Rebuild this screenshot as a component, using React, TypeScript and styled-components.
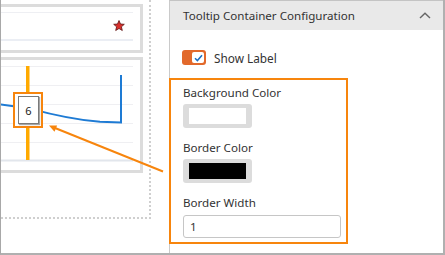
import * as React from "react";
import styled, { createGlobalStyle } from "styled-components";

const GlobalStyle = createGlobalStyle`
  html, body {
    margin: 0;
    padding: 0;
    background: #ffffff;
  }
  body {
    font-family: "Noto Sans", "Open Sans", sans-serif;
    color: #333333;
  }
`;

const ORANGE = "#f7850d";

const Frame = styled.div`
  position: relative;
  width: 445px;
  height: 255px;
  box-sizing: border-box;
  display: grid;
  grid-template-columns: 168px 1fr;
  border-left: 1px solid #a8a8a8;
  border-right: 2px solid #b0b0b0;
  border-bottom: 2px solid #b0b0b0;
  overflow: hidden;
`;

const Canvas = styled.div`
  overflow: hidden;
`;

const DropZone = styled.div`
  width: 150px;
  height: 219px;
  box-sizing: border-box;
  padding: 4px 6px 0 0;
  border-right: 2px dotted #cfcfcf;
  border-bottom: 2px dotted #cfcfcf;
  display: flex;
  flex-direction: column;
  gap: 4px;
`;

const Card = styled.div<{ $h: number }>`
  position: relative;
  margin-left: -10px;
  height: ${(p) => p.$h}px;
  box-sizing: border-box;
  border: 3px solid #dcdcdc;
  background: #ffffff;
  svg {
    display: block;
  }
`;

const TipMark = styled.div`
  position: absolute;
  left: 19px;
  top: 32px;
  width: 30px;
  height: 36px;
  box-sizing: border-box;
  border: 2px solid ${ORANGE};
  background: #ffffff;
  padding: 2px 2px 0 3px;
`;

const TipBox = styled.div`
  width: 21px;
  height: 28px;
  box-sizing: border-box;
  border: 1px solid #7a7a7a;
  box-shadow: 1px 1px 1px rgba(0, 0, 0, 0.35);
  background: #ffffff;
  display: flex;
  align-items: center;
  justify-content: center;
  font-size: 11px;
  color: #222;
`;

const Panel = styled.div`
  border-left: 1px solid #cacaca;
  border-top: 1px solid #c4c4c4;
  display: flex;
  flex-direction: column;
`;

const PanelHeader = styled.div`
  height: 29px;
  background: #e9e9e9;
  display: flex;
  align-items: center;
  justify-content: space-between;
  padding: 0 12px 0 13px;
  font-size: 11.6px;
  color: #333333;
`;

const PanelBody = styled.div`
  padding: 20px 0 0 13px;
  display: flex;
  flex-direction: column;
`;

const ToggleRow = styled.div`
  display: flex;
  align-items: center;
  gap: 8px;
  height: 15px;
  font-size: 11.8px;
`;

const Toggle = styled.div`
  margin-left: -1px;
  width: 24px;
  height: 15px;
  box-sizing: border-box;
  border-radius: 3px;
  background: #e2692b;
  padding: 2px 2px 2px 10px;
  display: flex;
`;

const ToggleKnob = styled.div`
  flex: 1;
  background: #ffffff;
  border-radius: 2px;
  display: flex;
  align-items: center;
  justify-content: center;
`;

const Highlight = styled.div`
  margin: 13px 0 0 -14px;
  width: 179px;
  box-sizing: border-box;
  border: 2px solid ${ORANGE};
  padding: 5px 0 4px 12px;
  display: flex;
  flex-direction: column;
`;

const FieldLabel = styled.div`
  font-size: 11.6px;
  line-height: 16px;
  color: #333333;
  margin-bottom: 3px;
`;

const Swatch = styled.div<{ $fill: string }>`
  width: 69px;
  height: 24px;
  box-sizing: border-box;
  border-radius: 3px;
  background: #dcdcdc;
  padding: 4px 6px;
  margin-bottom: 12px;
  &::after {
    content: "";
    display: block;
    width: 100%;
    height: 100%;
    background: ${(p) => p.$fill};
  }
`;

const TextInput = styled.div`
  margin-top: 1px;
  width: 158px;
  height: 23px;
  box-sizing: border-box;
  border: 1px solid #c6c6c6;
  border-radius: 3px;
  padding-left: 6px;
  display: flex;
  align-items: center;
  font-size: 11.6px;
  color: #333;
`;

const Overlay = styled.svg`
  position: absolute;
  left: 0;
  top: 0;
  pointer-events: none;
`;

const TopChart = () => (
  <svg width={146} height={43} viewBox="-6 7 146 43">
    <line x1={-6} y1={12.5} x2={133} y2={12.5} stroke="#eeeff3" strokeWidth={1} />
    <line x1={-6} y1={40} x2={133} y2={40} stroke="#e4e9f0" strokeWidth={1.5} />
    <polygon
      points="119,20.5 120.5,24 124.3,24.3 121.4,26.8 122.3,30.5 119,28.5 115.7,30.5 116.6,26.8 113.7,24.3 117.5,24"
      fill="#d9302c"
      stroke="#5a1414"
      strokeWidth={0.8}
      strokeLinejoin="round"
    />
  </svg>
);

const LineChart = () => (
  <svg width={146} height={110} viewBox="-6 60 146 110">
    {[66, 85, 104, 123, 142].map((y) => (
      <line key={y} x1={-6} y1={y + 0.5} x2={133} y2={y + 0.5} stroke="#efeff2" strokeWidth={1} />
    ))}
    <line x1={-6} y1={160.5} x2={133} y2={160.5} stroke="#e2e6ec" strokeWidth={2} />
    <rect x={26} y={66} width={3.5} height={94} fill="#ffaa00" />
    <path
      d="M-6 103.5 L30 108.6 Q70 119.5 100 121.8 L121 122.5 L121 75"
      fill="none"
      stroke="#1e7bd4"
      strokeWidth={2}
    />
  </svg>
);

const App: React.FC = () => {
  return (
    <>
      <GlobalStyle />
      <Frame>
        <Canvas>
          <DropZone>
            <Card $h={49}>
              <TopChart />
            </Card>
            <Card $h={116}>
              <LineChart />
              <TipMark>
                <TipBox>6</TipBox>
              </TipMark>
            </Card>
          </DropZone>
        </Canvas>
        <Panel>
          <PanelHeader>
            <span>Tooltip Container Configuration</span>
            <svg width={12} height={7} viewBox="0 0 12 7">
              <path d="M1 6 L6 1.2 L11 6" fill="none" stroke="#666" strokeWidth={1.4} />
            </svg>
          </PanelHeader>
          <PanelBody>
            <ToggleRow>
              <Toggle>
                <ToggleKnob>
                  <svg width={9} height={8} viewBox="0 0 9 8">
                    <path d="M1 4.3 L3.4 6.6 L8 1.2" fill="none" stroke="#1b6ec2" strokeWidth={1.5} />
                  </svg>
                </ToggleKnob>
              </Toggle>
              <span>Show Label</span>
            </ToggleRow>
            <Highlight>
              <FieldLabel>Background Color</FieldLabel>
              <Swatch $fill="#ffffff" />
              <FieldLabel>Border Color</FieldLabel>
              <Swatch $fill="#000000" />
              <FieldLabel>Border Width</FieldLabel>
              <TextInput>1</TextInput>
            </Highlight>
          </PanelBody>
        </Panel>
        <Overlay width={445} height={255} viewBox="0 0 445 255">
          <line x1={162} y1={171.5} x2={54} y2={128} stroke={ORANGE} strokeWidth={2} />
          <polygon points="48,125.6 56.1,125.4 53.5,131.8" fill={ORANGE} />
        </Overlay>
      </Frame>
    </>
  );
};

export default App;
